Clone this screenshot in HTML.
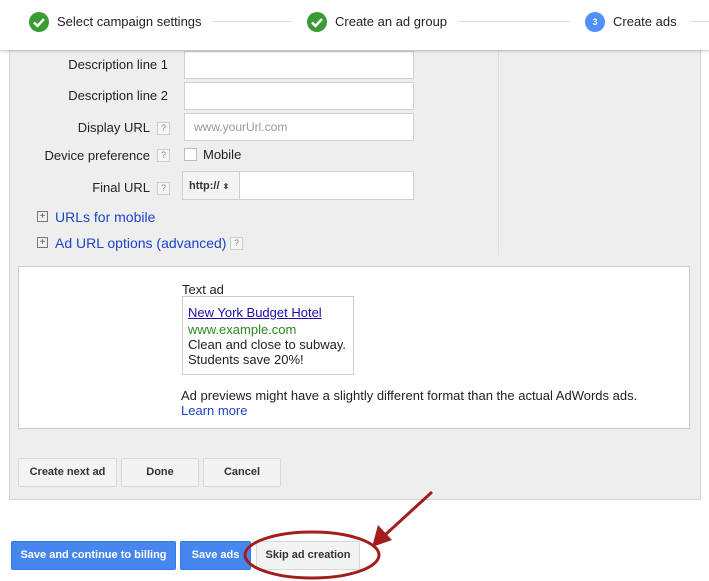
<!DOCTYPE html>
<html><head><style>
*{box-sizing:border-box}
body{margin:0;width:709px;height:581px;background:#fff;font-family:"Liberation Sans",Arial,sans-serif;position:relative;overflow:hidden;font-size:13px;color:#222}
.a{position:absolute}
.hdr{left:0;top:0;width:709px;height:50px;background:#fff;box-shadow:0 1px 3px rgba(0,0,0,.25);z-index:2}
.ck{width:20px;height:20px;border-radius:50%;background:#3a9b35;top:12px}
.line{height:1px;background:#ddd;top:21px}
.step{top:14px;font-size:13px;color:#222}
.panel{left:9px;top:40px;width:692px;height:460px;background:#eee;border:1px solid #d4d4d4}
.lbl{font-size:13px;text-align:right;width:140px;left:28px}
.in{background:#fff;border:1px solid #d0d0d0;left:184px;width:230px;height:28px}
.q{width:13px;height:13px;border:1px solid #ccc;background:#f6f6f6;font-size:9px;color:#888;text-align:center;line-height:11px}
.pl{width:11px;height:11px;border:1px solid #777;font-size:10px;line-height:9px;text-align:center;color:#555}
.lnk{color:#1a45c8;font-size:14px}
.btn{background:#f3f3f3;border:1px solid #d8d8d8;border-radius:2px;font-size:11px;font-weight:bold;color:#333;text-align:center;line-height:27px;height:29px;top:458px}
.bb{background:#4787ed;border:1px solid #3079ed;color:#fff;font-size:11px;font-weight:bold;text-align:center;line-height:27px;height:29px;top:541px;border-radius:2px}
</style></head><body>
<div class="a hdr">
 <div class="a ck" style="left:29px"><svg width="20" height="20"><path d="M5 10.5l3.5 3.5 6.5-7" stroke="#fff" stroke-width="2.4" fill="none"/></svg></div>
 <div class="a step" style="left:57px">Select campaign settings</div>
 <div class="a line" style="left:212px;width:80px"></div>
 <div class="a ck" style="left:307px"><svg width="20" height="20"><path d="M5 10.5l3.5 3.5 6.5-7" stroke="#fff" stroke-width="2.4" fill="none"/></svg></div>
 <div class="a step" style="left:335px">Create an ad group</div>
 <div class="a line" style="left:458px;width:112px"></div>
 <div class="a" style="left:585px;top:12px;width:20px;height:20px;border-radius:50%;background:#4d90fe;color:#fff;font-size:9px;font-weight:bold;text-align:center;line-height:20px">3</div>
 <div class="a step" style="left:613px">Create ads</div>
 <div class="a line" style="left:690px;width:19px"></div>
</div>
<div class="a panel"></div>
<div class="a" style="left:498px;top:50px;width:1px;height:205px;background:#ddd"></div>
<div class="a lbl" style="top:57px">Description line 1</div>
<div class="a in" style="top:51px"></div>
<div class="a lbl" style="top:88px">Description line 2</div>
<div class="a in" style="top:82px"></div>
<div class="a lbl" style="top:120px;width:122px">Display URL</div>
<div class="a q" style="left:157px;top:122px">?</div>
<div class="a in" style="top:113px"><span class="a" style="left:9px;top:6px;color:#999;font-size:12px">www.yourUrl.com</span></div>
<div class="a lbl" style="top:148px;width:124px;left:26px">Device preference</div>
<div class="a q" style="left:157px;top:149px">?</div>
<div class="a" style="left:184px;top:148px;width:13px;height:13px;border:1px solid #bbb;background:#fff"></div>
<div class="a" style="left:203px;top:147px">Mobile</div>
<div class="a lbl" style="top:180px;width:122px">Final URL</div>
<div class="a q" style="left:157px;top:182px">?</div>
<div class="a" style="left:182px;top:171px;width:232px;height:29px;border:1px solid #d0d0d0;background:#f4f4f4"></div>
<div class="a" style="left:189px;top:180px;font-size:11px;font-weight:bold;color:#333">http:// <span style="font-size:8px;color:#555">&#x2B0D;</span></div>
<div class="a" style="left:239px;top:172px;width:174px;height:27px;background:#fff;border-left:1px solid #d0d0d0"></div>
<div class="a pl" style="left:37px;top:211px">+</div>
<div class="a lnk" style="left:55px;top:209px">URLs for mobile</div>
<div class="a pl" style="left:37px;top:237px">+</div>
<div class="a lnk" style="left:55px;top:235px">Ad URL options (advanced)</div>
<div class="a q" style="left:230px;top:237px">?</div>
<div class="a" style="left:18px;top:266px;width:672px;height:163px;background:#fff;border:1px solid #ccc"></div>
<div class="a" style="left:182px;top:282px">Text ad</div>
<div class="a" style="left:182px;top:296px;width:172px;height:79px;border:1px solid #ccc"></div>
<div class="a" style="left:188px;top:305px;color:#1a0dab;text-decoration:underline">New York Budget Hotel</div>
<div class="a" style="left:188px;top:322px;color:#2a8a1e">www.example.com</div>
<div class="a" style="left:188px;top:337px;line-height:15px">Clean and close to subway.<br>Students save 20%!</div>
<div class="a" style="left:181px;top:388px">Ad previews might have a slightly different format than the actual AdWords ads.</div>
<div class="a" style="left:181px;top:403px;color:#1a45c8">Learn more</div>
<div class="a btn" style="left:18px;width:99px">Create next ad</div>
<div class="a btn" style="left:121px;width:78px">Done</div>
<div class="a btn" style="left:203px;width:78px">Cancel</div>
<div class="a bb" style="left:11px;width:165px">Save and continue to billing</div>
<div class="a bb" style="left:180px;width:71px">Save ads</div>
<div class="a btn" style="left:256px;top:541px;width:104px">Skip ad creation</div>
<svg class="a" style="left:0;top:0" width="709" height="581">
 <ellipse cx="312" cy="555" rx="67" ry="23" fill="none" stroke="#a31d1d" stroke-width="3"/>
 <line x1="432" y1="492" x2="385" y2="535" stroke="#a31d1d" stroke-width="3"/>
 <path d="M372 547 L378 525 L392 540 Z" fill="#a31d1d"/>
</svg>
</body></html>
